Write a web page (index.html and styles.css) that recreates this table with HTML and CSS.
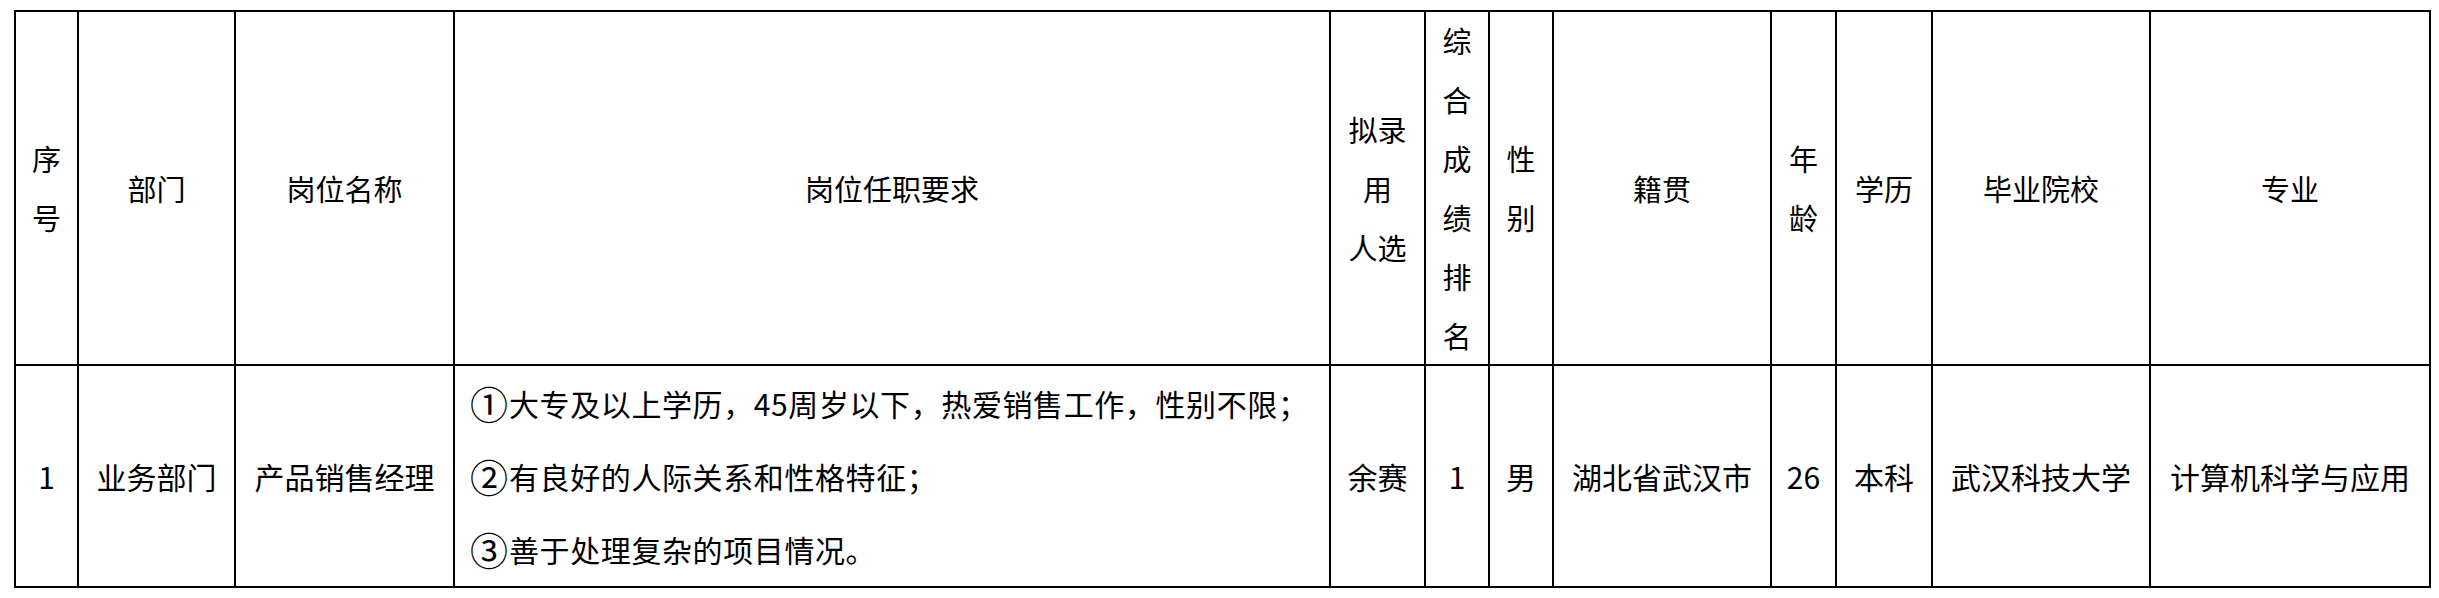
FILE: index.html
```html
<!DOCTYPE html>
<html lang="zh-CN">
<head>
<meta charset="utf-8">
<title>拟录用人员公示</title>
<link rel="stylesheet" href="styles.css">
</head>
<body>
<div class="sheet" role="table">
  <div class="cell head" role="columnheader">序<br>号</div>
  <div class="cell head" role="columnheader">部门</div>
  <div class="cell head" role="columnheader">岗位名称</div>
  <div class="cell head" role="columnheader">岗位任职要求</div>
  <div class="cell head" role="columnheader">拟录<br>用<br>人选</div>
  <div class="cell head" role="columnheader">综<br>合<br>成<br>绩<br>排<br>名</div>
  <div class="cell head" role="columnheader">性<br>别</div>
  <div class="cell head" role="columnheader">籍贯</div>
  <div class="cell head" role="columnheader">年<br>龄</div>
  <div class="cell head" role="columnheader">学历</div>
  <div class="cell head" role="columnheader">毕业院校</div>
  <div class="cell head" role="columnheader">专业</div>

  <div class="cell body" role="cell">1</div>
  <div class="cell body" role="cell">业务部门</div>
  <div class="cell body" role="cell">产品销售经理</div>
  <div class="cell body reqs" role="cell">
    <p class="req"><span class="num">①</span>大专及以上学历，45周岁以下，热爱销售工作，性别不限；</p>
    <p class="req"><span class="num">②</span>有良好的人际关系和性格特征；</p>
    <p class="req"><span class="num">③</span>善于处理复杂的项目情况。</p>
  </div>
  <div class="cell body" role="cell">余赛</div>
  <div class="cell body" role="cell">1</div>
  <div class="cell body" role="cell">男</div>
  <div class="cell body" role="cell">湖北省武汉市</div>
  <div class="cell body" role="cell">26</div>
  <div class="cell body" role="cell">本科</div>
  <div class="cell body" role="cell">武汉科技大学</div>
  <div class="cell body" role="cell">计算机科学与应用</div>
</div>
</body>
</html>
```

FILE: styles.css
```css
html, body {
  margin: 0;
  padding: 0;
  background: #ffffff;
}

body {
  padding: 10px 0 0 14px;
  font-family: "Noto Sans CJK SC", "Noto Sans", sans-serif;
  color: #000000;
}

.sheet {
  display: inline-grid;
  grid-template-columns: 61px 155px 217px 874px 93px 62px 62px 216px 63px 94px 216px 278px;
  grid-template-rows: 352px 220px;
  gap: 2px;
  padding: 2px;
  background: #000000;
}

.cell {
  background: #ffffff;
  display: flex;
  align-items: center;
  justify-content: center;
  text-align: center;
  overflow: hidden;
}

.head {
  font-size: 29px;
  line-height: 59px;
}

.body {
  font-size: 30px;
  line-height: 40px;
}

.reqs {
  flex-direction: column;
  align-items: flex-start;
  justify-content: center;
  text-align: left;
  padding: 0 0 0 15px;
}

.req {
  margin: 0;
  height: 73px;
  line-height: 73px;
  letter-spacing: 0.6px;
  white-space: nowrap;
}

.num {
  font-size: 38px;
  line-height: 1;
  vertical-align: -3px;
  margin-right: 1px;
  letter-spacing: 0;
}
```
